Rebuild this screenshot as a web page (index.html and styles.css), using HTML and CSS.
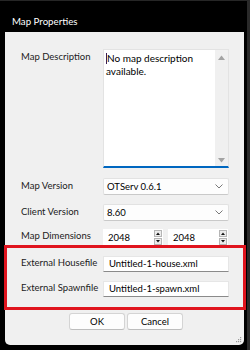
FILE: index.html
```html
<!DOCTYPE html>
<html>
<head>
<meta charset="utf-8">
<link rel="stylesheet" href="styles.css">
</head>
<body>
<div class="window">
  <div class="titlebar">Map Properties</div>
  <div class="dialog">
    <div class="row desc-row">
      <div class="label">Map Description</div>
      <div class="textarea">
        <div class="ta-text"><span class="caret"></span>No map description available.</div>
        <div class="scrollbar">
          <svg width="7" height="5" viewBox="0 0 7 5"><path d="M0 5 L3.5 0.5 L7 5 Z" fill="#a3a3a3"/></svg>
          <svg width="7" height="5" viewBox="0 0 7 5"><path d="M0 0 L3.5 4.5 L7 0 Z" fill="#a3a3a3"/></svg>
        </div>
      </div>
    </div>
    <div class="row sel-row first-sel">
      <div class="label">Map Version</div>
      <div class="select"><span>OTServ 0.6.1</span>
        <svg width="8" height="5" viewBox="0 0 8 5"><path d="M0.5 0.5 L4 4 L7.5 0.5" fill="none" stroke="#6a6a6a" stroke-width="0.9"/></svg>
      </div>
    </div>
    <div class="row sel-row">
      <div class="label">Client Version</div>
      <div class="select"><span>8.60</span>
        <svg width="8" height="5" viewBox="0 0 8 5"><path d="M0.5 0.5 L4 4 L7.5 0.5" fill="none" stroke="#6a6a6a" stroke-width="0.9"/></svg>
      </div>
    </div>
    <div class="row spin-row">
      <div class="label">Map Dimensions</div>
      <div class="spins">
        <div class="spin"><span>2048</span>
          <div class="spinbtns">
            <div class="sb"><svg width="4" height="3" viewBox="0 0 4 3"><path d="M0 3 L2 0.5 L4 3 Z" fill="#111"/></svg></div>
            <div class="sb"><svg width="4" height="3" viewBox="0 0 4 3"><path d="M0 0 L2 2.5 L4 0 Z" fill="#111"/></svg></div>
          </div>
        </div>
        <div class="spin"><span>2048</span>
          <div class="spinbtns">
            <div class="sb"><svg width="4" height="3" viewBox="0 0 4 3"><path d="M0 3 L2 0.5 L4 3 Z" fill="#111"/></svg></div>
            <div class="sb"><svg width="4" height="3" viewBox="0 0 4 3"><path d="M0 0 L2 2.5 L4 0 Z" fill="#111"/></svg></div>
          </div>
        </div>
      </div>
    </div>
    <div class="highlight">
      <div class="row file-row">
        <div class="label">External Housefile</div>
        <div class="input">Untitled-1-house.xml</div>
      </div>
      <div class="row file-row second-file">
        <div class="label">External Spawnfile</div>
        <div class="input">Untitled-1-spawn.xml</div>
      </div>
    </div>
    <div class="buttons">
      <div class="btn">OK</div>
      <div class="btn">Cancel</div>
    </div>
    <svg class="grip" width="6" height="6" viewBox="0 0 6 6">
      <rect x="4" y="0" width="1.2" height="1.2" fill="#9a9a9a"/>
      <rect x="2" y="2" width="1.2" height="1.2" fill="#9a9a9a"/>
      <rect x="4" y="2" width="1.2" height="1.2" fill="#9a9a9a"/>
      <rect x="0" y="4" width="1.2" height="1.2" fill="#9a9a9a"/>
      <rect x="2" y="4" width="1.2" height="1.2" fill="#9a9a9a"/>
      <rect x="4" y="4" width="1.2" height="1.2" fill="#9a9a9a"/>
    </svg>
  </div>
</div>
</body>
</html>
```

FILE: styles.css
```css
html, body {
  margin: 0;
  padding: 0;
  background: #000;
}
body {
  width: 250px;
  height: 350px;
  overflow: hidden;
  font-family: Lato, "Noto Sans", sans-serif;
  font-size: 9.5px;
  color: #1b1b1b;
}
.window {
  width: 250px;
  height: 350px;
  box-sizing: border-box;
  border-top: 1px solid #262626;
  border-right: 3px solid #2a2a2a;
}
.titlebar {
  height: 31px;
  box-sizing: border-box;
  padding: 13px 0 0 12px;
  line-height: 14px;
  font-size: 9.7px;
  color: #fff;
}
.dialog {
  position: relative;
  margin: 0 3px 0 5px;
  height: 313px;
  box-sizing: border-box;
  background: #f0f0f0;
  border-radius: 0 0 5px 5px;
  padding: 17px 15px 0 16px;
}
.row {
  display: grid;
  grid-template-columns: 82px 126px;
}
.label {
  line-height: 13px;
  white-space: nowrap;
}
.desc-row .label { padding-top: 1px; }
.textarea {
  height: 119px;
  box-sizing: border-box;
  background: #fff;
  border: 1px solid #e3e3e3;
  border-bottom: 2px solid #0067c0;
  display: flex;
}
.ta-text {
  flex: 1;
  padding: 2px 0 0 2px;
  line-height: 12.5px;
  font-size: 10px;
  color: #000;
}
.caret {
  display: inline-block;
  width: 1px;
  height: 11px;
  background: #3a1d50;
  vertical-align: -2px;
}
.scrollbar {
  width: 13px;
  background: #f0f0f0;
  display: flex;
  flex-direction: column;
  justify-content: space-between;
  align-items: center;
  padding: 5px 0 3px;
}
.scrollbar svg { display: block; }
.sel-row { margin-top: 9px; }
.first-sel { margin-top: 10px; }
.sel-row .label { padding-top: 1px; }
.select {
  height: 17px;
  box-sizing: border-box;
  background: #fdfdfd;
  border: 1px solid #e2e2e2;
  border-bottom-color: #c9c9c9;
  border-radius: 2px;
  display: flex;
  align-items: center;
  justify-content: space-between;
  padding: 0 5px 0 3px;
  color: #000;
}
.select svg { display: block; }
.spin-row { margin-top: 8px; }
.spin-row .label { padding-top: 0; }
.spins {
  display: flex;
  gap: 5px;
}
.spin {
  width: 60px;
  height: 16px;
  box-sizing: border-box;
  background: #fff;
  display: flex;
  align-items: center;
  justify-content: space-between;
  padding: 0 0 0 5px;
  color: #000;
}
.spinbtns {
  display: flex;
  flex-direction: column;
  gap: 1px;
  margin-right: 1px;
}
.sb {
  width: 8px;
  height: 7px;
  box-sizing: border-box;
  border: 1px solid #b5b5b5;
  background: #ececec;
  display: flex;
  align-items: center;
  justify-content: center;
}
.sb svg { display: block; }
.highlight {
  margin: 0 -17px 0 -17px;
  border: 3px solid #e0141e;
  padding: 8px 14px 10px 14px;
}
.file-row .label { padding-top: 0; }
.second-file { margin-top: 9px; }
.input {
  height: 16px;
  box-sizing: border-box;
  background: #fff;
  border: 1px solid #e6e6e6;
  border-bottom-color: #8a8a8a;
  padding: 0 5px;
  line-height: 14px;
  color: #000;
}
.buttons {
  margin-top: 3px;
  display: flex;
  justify-content: center;
  gap: 2px;
  padding-left: 2px;
}
.btn {
  width: 56px;
  height: 17px;
  box-sizing: border-box;
  background: #fdfdfd;
  border: 1px solid #d4d4d4;
  border-bottom-color: #bdbdbd;
  border-radius: 3px;
  text-align: center;
  line-height: 15px;
  color: #000;
}
.grip {
  position: absolute;
  right: 2px;
  bottom: 2px;
}
```
